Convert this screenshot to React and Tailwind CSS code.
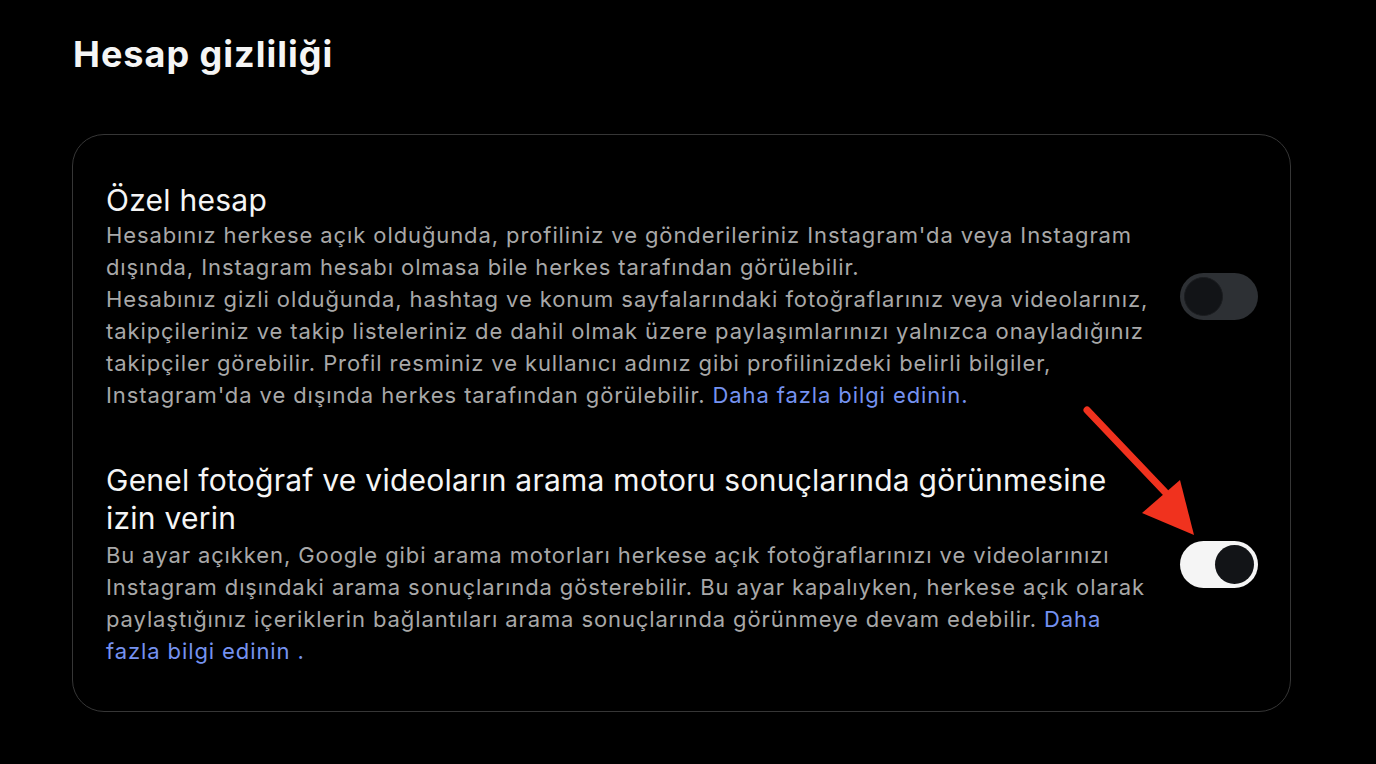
import React from 'react';

const Toggle = ({ on }) => (
  <div
    className={
      'w-[78px] h-[47px] rounded-full flex items-center px-[4px] shrink-0 ' +
      (on ? 'bg-[#f5f5f5] justify-end' : 'bg-[#2d3034] justify-start')
    }
  >
    <div className={'w-[39px] h-[39px] rounded-full bg-[#121417] ' + (on ? '' : 'border border-[#1b1d20]')} />
  </div>
);

const Link = ({ children }) => <span className="text-[#7592f0]">{children}</span>;

const Row = ({ title, children, on, gap }) => (
  <div className="flex items-center justify-between">
    <div className="w-[1046px]">
      <div className="text-[30px] leading-[38px] text-[#f5f5f5] tracking-[0.25px]">{title}</div>
      <div className={'text-[22px] leading-[32px] text-[#a8a8a8] tracking-[0.9px] ' + (gap ? 'mt-[2px]' : '')}>{children}</div>
    </div>
    <Toggle on={on} />
  </div>
);

export default function App() {
  return (
    <div
      className="relative min-h-[764px] bg-black px-[72px] pt-[32px]"
      style={{ fontFamily: 'Inter, "Noto Sans", sans-serif' }}
    >
      <h1 className="text-[36px] leading-[44px] font-bold text-[#f5f5f5] ml-[1px] tracking-[1px]">Hesap gizliliği</h1>
      <div className="mt-[58px] w-[1219px] rounded-[32px] border border-[#363636] pl-[33px] pr-[32px] pt-[46px] pb-[44px] flex flex-col gap-[50px]">
        <Row title="Özel hesap" on={false}>
          Hesabınız herkese açık olduğunda, profiliniz ve gönderileriniz Instagram'da veya Instagram dışında, Instagram hesabı olmasa bile herkes tarafından görülebilir.
          <br />
          Hesabınız gizli olduğunda, hashtag ve konum sayfalarındaki fotoğraflarınız veya videolarınız, takipçileriniz ve takip listeleriniz de dahil olmak üzere paylaşımlarınızı yalnızca onayladığınız takipçiler görebilir. Profil resminiz ve kullanıcı adınız gibi profilinizdeki belirli bilgiler, Instagram'da ve dışında herkes tarafından görülebilir. <Link>Daha fazla bilgi edinin.</Link>
        </Row>
        <Row title="Genel fotoğraf ve videoların arama motoru sonuçlarında görünmesine izin verin" on={true} gap>
          Bu ayar açıkken, Google gibi arama motorları herkese açık fotoğraflarınızı ve videolarınızı Instagram dışındaki arama sonuçlarında gösterebilir. Bu ayar kapalıyken, herkese açık olarak paylaştığınız içeriklerin bağlantıları arama sonuçlarında görünmeye devam edebilir. <Link>Daha fazla bilgi edinin .</Link>
        </Row>
      </div>
      <svg className="absolute left-0 top-0 pointer-events-none" width="1376" height="764">
        <line x1="1087" y1="410" x2="1165" y2="492" stroke="#f0321e" strokeWidth="7" strokeLinecap="round" />
        <polygon points="1142,513 1180,480 1194,535" fill="#f0321e" />
      </svg>
    </div>
  );
}
